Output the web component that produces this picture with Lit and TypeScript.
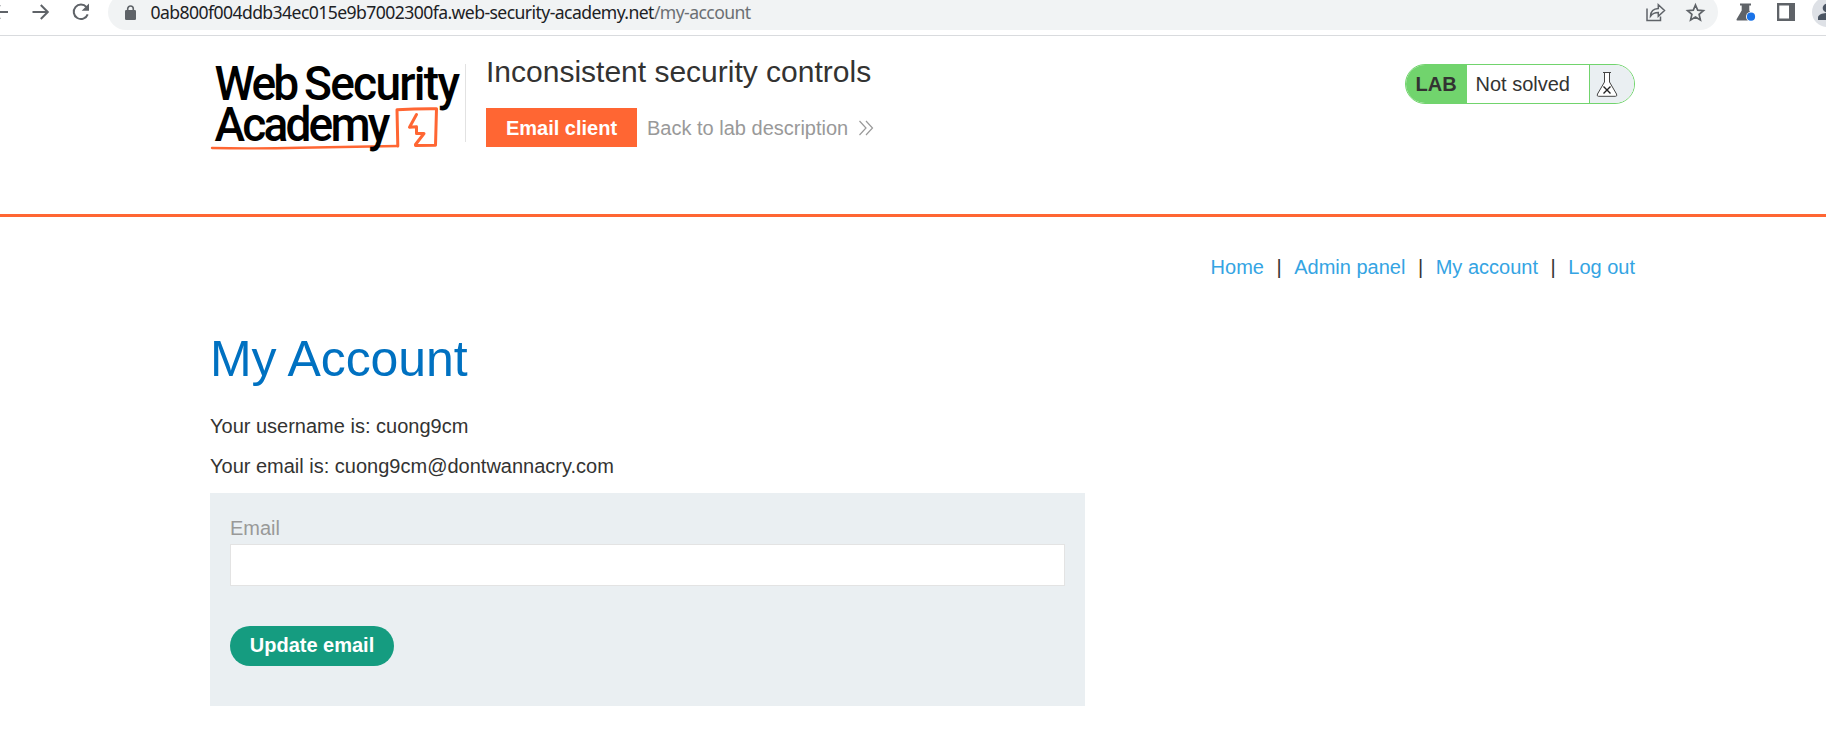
import { LitElement, html, css } from "lit";
import { customElement } from "lit/decorators.js";

@customElement("browser-bar")
class BrowserBar extends LitElement {
  static styles = css`
    :host { display: flex; height: 35px; overflow: hidden; background: #fff; border-bottom: 1px solid #d9dbde; }
    svg { display: block; flex: none; }
    .nav { display: flex; width: 108px; margin-left: -20px; flex: none; padding-right: 20px; }
    .omni { display: flex; width: 1610px; height: 36px; margin-top: -6px; padding-top: 6px; box-sizing: border-box; border-radius: 18px; background: #f1f3f4; flex: none; }
    .lock { margin-left: 14px; }
    .url { margin-left: 12.5px; font: 17.6px/24px "Noto Sans", sans-serif; color: #202124; white-space: nowrap; flex: 1; letter-spacing: -0.58px; }
    .url span { color: #6b6f73; }
    .ext { display: flex; flex: none; width: 128px; }
  `;
  render() {
    return html`
      <div class="nav">
        <svg width="40" height="30" fill="none" stroke="#5f6368" stroke-width="2"><path d="M28 12H13M20 5l-7 7 7 7" /></svg>
        <svg width="40" height="30" fill="none" stroke="#5f6368" stroke-width="2"><path d="M12.500 12H27.500M20.800 5l7 7-7 7" /></svg>
        <svg width="40" height="30" fill="none" stroke="#5f6368" stroke-width="2"><path d="M26.500 7.200A7.200 7.200 0 1 0 27.700 14.300" /><path d="M29 3.500v7.300h-7.300z" fill="#5f6368" stroke="none" /></svg>
      </div>
      <div class="omni">
        <svg class="lock" width="16" height="30"><rect x="3" y="10" width="11" height="10" rx="1.300" fill="#5f6368" /><path d="M5.700 11V8.800a2.800 2.800 0 0 1 5.600 0V11" fill="none" stroke="#5f6368" stroke-width="1.600" /></svg>
        <div class="url">0ab800f004ddb34ec015e9b7002300fa.web-security-academy.net<span>/my-account</span></div>
        <svg width="80" height="30" fill="none" stroke="#5f6368" stroke-width="1.500">
          <path d="M9 8.500v12h13.500v-4M12.500 16.200c.3-5 3-7.400 7.800-7.600V4.700l6.200 5.800-6.200 5.800v-3.700c-3.500 0-5.800 1-7.800 3.600z" />
          <path d="M57.500 5l2.200 5.200 5.700.5-4.300 3.700 1.300 5.500-4.900-2.900-4.900 2.900 1.300-5.500-4.300-3.700 5.700-.5z" stroke-width="1.700" />
        </svg>
      </div>
      <div class="ext">
        <svg width="108" height="30">
          <path d="M22 3.500h11v2h-1.700v5L36 20.500H19.500c-1 0-1.200-.7-.8-1.500l5-8.500v-5H22z" fill="#5f6368" />
          <circle cx="33" cy="16.700" r="5" fill="#fff" /><circle cx="33" cy="16.700" r="4.100" fill="#1a73e8" />
          <path d="M59 3h18v18H59zM61.300 5.500v13H71v-13z" fill="#5f6368" fill-rule="evenodd" />
          <circle cx="109" cy="12" r="15" fill="#dee1e6" />
          <circle cx="109" cy="8" r="4.300" fill="#4b5563" /><path d="M100 20v-2.500c0-3 5-4.500 9-4.500v7z" fill="#4b5563" />
        </svg>
      </div>`;
  }
}

@customElement("academy-logo")
class AcademyLogo extends LitElement {
  static styles = css`
    :host { display: block; width: 255px; height: 110px; }
    svg { display: block; overflow: visible; }
    text { font-family: Roboto, sans-serif; font-weight: 500; font-size: 49px; }
  `;
  render() {
    return html`<svg width="255" height="110" viewBox="210 50 255 110">
      <text transform="translate(214.500 100.300) scale(.94 1)" textLength="90" lengthAdjust="spacing">Web</text>
      <text transform="translate(304 100.300) scale(.94 1)" textLength="166" lengthAdjust="spacing">Security</text>
      <g fill="none" stroke="#ff6633" stroke-linejoin="round" stroke-linecap="round">
        <path d="M397.800 146L397 109.800Q417 108.600 436.500 108.800L435.500 145.300 415.500 145.600" stroke-width="3" />
        <path d="M416.500 114.500L409.500 127.200 416.500 126.800V133.500L424 133.500 415.500 144.500" stroke-width="3" />
        <path d="M397.800 146Q340 147 300 147.800 250 148.800 212 148" stroke-width="2.400" />
      </g>
      <text transform="translate(214.500 141) scale(.94 1)" textLength="187" lengthAdjust="spacing">Academy</text>
    </svg>`;
  }
}

@customElement("lab-status")
class LabStatus extends LitElement {
  static styles = css`
    :host { display: flex; box-sizing: border-box; width: 230px; height: 40px; border: 1px solid #71d46d; border-radius: 20px; overflow: hidden; font-size: 20px; line-height: 38px; background: #fff; }
    .lab { width: 61px; box-sizing: border-box; padding-left: 9.5px; background: #71d46d; font-weight: bold; }
    .state { width: 123px; box-sizing: border-box; padding-left: 8.5px; border-right: 1px solid #71d46d; }
    .flask { flex: 1; background: #eaeff2; }
    svg { display: block; }
  `;
  render() {
    return html`<div class="lab">LAB</div><div class="state">Not solved</div>
      <div class="flask"><svg width="44" height="38" fill="none" stroke="#444" stroke-width="1">
        <path d="M13 7.500h8M14.500 8v9L7.500 29q-1 2.300 1 2.300h17q2 0 1-2.300L19.500 17V8" fill="#fff" />
        <path d="M13.500 21.500l7 7M20.500 21.500l-7 7" stroke="#222" stroke-width="1.400" />
      </svg></div>`;
  }
}

@customElement("app-root")
class AppRoot extends LitElement {
  static styles = css`
    :host { display: block; height: 742px; overflow: hidden; background: #fff; color: #333332; font: 20px/24px "Liberation Sans", Arial, sans-serif; }
    .head { height: 178px; border-bottom: 3px solid #ff6633; }
    .wrap { width: 1425px; margin-left: 210px; }
    .headrow { display: flex; align-items: flex-start; }
    academy-logo { margin-top: 14px; }
    .intro { margin-top: 28px; height: 78px; border-left: 1px solid #e2e2e2; padding-left: 20px; flex: 1; }
    .title { margin: -10px 0 18px; font-size: 30px; line-height: 36px; font-weight: normal; }
    .actions { display: flex; }
    .client { width: 151px; height: 39px; line-height: 40px; text-align: center; background: #ff6633; color: #fff; font-weight: bold; }
    .back { display: flex; margin-left: 10px; line-height: 40px; color: #999; }
    .back svg { margin: 12px 0 0 10px; }
    lab-status { margin-top: 28px; }
    .links { display: flex; justify-content: flex-end; padding-top: 38px; color: #34a4e3; white-space: pre; }
    .links i { font-style: normal; color: #333332; width: 30.3px; text-align: center; }
    h1 { margin: 50px 0 25px; font-size: 50px; line-height: 60px; font-weight: normal; color: #0071c1; letter-spacing: -0.1px; }
    p { margin: 0 0 16px; }
    p + p { margin-bottom: 15px; }
    .form { box-sizing: border-box; width: 875px; height: 213px; padding: 23px 20px 40px; background: #eaeff2; }
    .label { display: block; color: #999; }
    .input { display: block; box-sizing: border-box; width: 835px; height: 42px; margin: 4px 0 40px; border: 1px solid #e3e3e3; border-radius: 0; background: #fff; outline: none; }
    .update { display: block; width: 164px; height: 40px; border: 0; border-radius: 20px; padding: 0 0 2px; background: #159c80; color: #fff; font: bold 20px/38px "Liberation Sans", Arial, sans-serif; }
  `;
  render() {
    return html`
      <browser-bar></browser-bar>
      <header class="head"><div class="wrap headrow">
        <academy-logo></academy-logo>
        <div class="intro">
          <h2 class="title">Inconsistent security controls</h2>
          <div class="actions">
            <div class="client">Email client</div>
            <div class="back">Back to lab description<svg width="18" height="16" fill="none" stroke="#999" stroke-width="1.200"><path d="M1.500 1l6.500 7-6.500 7M8 1l6.500 7L8 15" /></svg></div>
          </div>
        </div>
        <lab-status></lab-status>
      </div></header>
      <main class="wrap">
        <nav class="links"><a>Home</a><i>|</i><a>Admin panel</a><i>|</i><a>My account</a><i>|</i><a>Log out</a></nav>
        <h1>My Account</h1>
        <p>Your username is: cuong9cm</p>
        <p>Your email is: cuong9cm@dontwannacry.com</p>
        <div class="form">
          <label class="label" for="email">Email</label>
          <input class="input" id="email" />
          <button class="update">Update email</button>
        </div>
      </main>`;
  }
}
